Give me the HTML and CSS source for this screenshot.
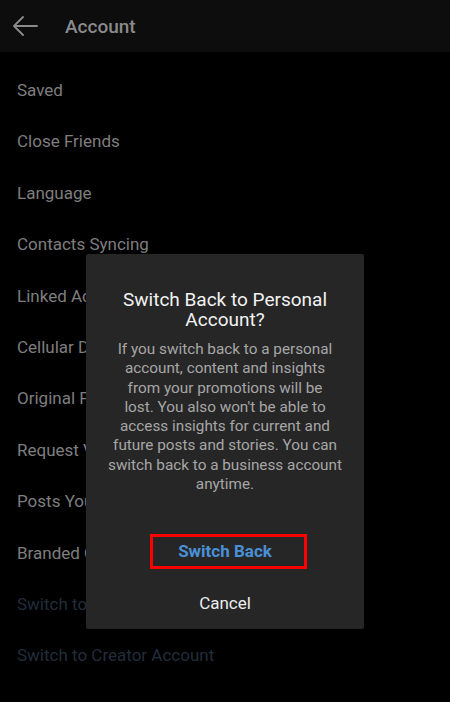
FILE: index.html
```html
<!DOCTYPE html>
<html>
<head>
<meta charset="utf-8">
<link rel="stylesheet" href="styles.css">
</head>
<body>
<div class="screen">
  <header class="topbar">
    <svg class="back" width="26" height="20" viewBox="0 0 26 20">
      <path d="M25 10H2M11 1L2 10l9 9" fill="none" stroke="#8a8a8a" stroke-width="1.8" stroke-linecap="round" stroke-linejoin="round"/>
    </svg>
    <span class="title">Account</span>
  </header>
  <ul class="list">
    <li>Saved</li>
    <li>Close Friends</li>
    <li>Language</li>
    <li>Contacts Syncing</li>
    <li>Linked Accounts</li>
    <li>Cellular Data Use</li>
    <li>Original Photos</li>
    <li>Request Verification</li>
    <li>Posts You've Liked</li>
    <li>Branded Content</li>
    <li class="link">Switch to Business Account</li>
    <li class="link">Switch to Creator Account</li>
  </ul>
  <div class="dialog">
    <h2 class="d-title">Switch Back to Personal<br>Account?</h2>
    <p class="d-body">If you switch back to a personal<br>account, content and insights<br>from your promotions will be<br>lost. You also won't be able to<br>access insights for current and<br>future posts and stories. You can<br>switch back to a business account<br>anytime.</p>
    <div class="d-btn primary"><span class="hl">Switch Back</span></div>
    <div class="d-btn">Cancel</div>
  </div>
</div>
</body>
</html>
```
FILE: styles.css
```css
html, body {
  margin: 0;
  padding: 0;
  background: #000;
}
.screen {
  position: relative;
  width: 450px;
  height: 702px;
  overflow: hidden;
  background: #000;
  font-family: Roboto, "Noto Sans", sans-serif;
}
.topbar {
  height: 52px;
  background: #0d0d0d;
  display: flex;
  align-items: center;
}
.back {
  margin-left: 12px;
}
.title {
  margin-left: 27px;
  color: #8a8a8a;
  font-size: 19px;
  font-weight: 500;
}
.list {
  list-style: none;
  margin: 0;
  padding: 13px 0 0 0;
}
.list li {
  height: 51.4px;
  line-height: 51.4px;
  padding-left: 17px;
  color: #7e7e7e;
  font-size: 17px;
}
.list li.link {
  color: #222d3b;
}
.dialog {
  position: absolute;
  left: 86px;
  top: 254px;
  width: 278px;
  height: 375px;
  box-sizing: border-box;
  background: #262626;
  border-radius: 2px;
  padding-top: 36px;
  text-align: center;
}
.d-title {
  margin: 0 10px;
  font-size: 19px;
  line-height: 20px;
  font-weight: 400;
  color: #f2f2f2;
}
.d-body {
  margin: 10px 10px 0;
  font-size: 15.3px;
  line-height: 19.3px;
  color: #a6a6a6;
  white-space: nowrap;
}
.d-btn {
  height: 52px;
  display: flex;
  align-items: center;
  justify-content: center;
  color: #ececec;
  font-size: 17px;
}
.d-btn.primary {
  margin-top: 31px;
  color: #4a90d6;
  font-weight: 700;
}
.hl {
  display: inline-flex;
  align-items: center;
  justify-content: center;
  box-sizing: border-box;
  width: 157px;
  height: 35px;
  margin-left: 6px;
  padding-right: 6px;
  border: 3px solid #ff0000;
}
```
